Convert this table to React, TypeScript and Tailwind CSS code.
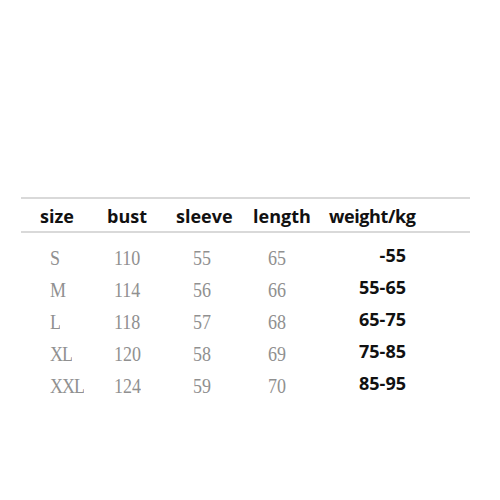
const rows = [
  { size: "S", bust: "110", sleeve: "55", length: "65", weight: "-55" },
  { size: "M", bust: "114", sleeve: "56", length: "66", weight: "55-65" },
  { size: "L", bust: "118", sleeve: "57", length: "68", weight: "65-75" },
  { size: "XL", bust: "120", sleeve: "58", length: "69", weight: "75-85" },
  { size: "XXL", bust: "124", sleeve: "59", length: "70", weight: "85-95" },
];

const cell =
  "font-['Liberation_Serif',serif] text-[18px] text-[#909090] scale-y-[1.18] origin-center";

export default function App() {
  return (
    <div className="w-[500px] h-[500px] bg-white pt-[197px]">
      <div className="ml-[21px] w-[449px]">
        <div className="border-t-2 border-b-2 border-[#d9d9d9] h-[36px] flex items-center pt-[2px] pl-[19px] font-['Open_Sans',sans-serif] font-bold text-[18px] text-[#111]">
          <div className="w-[67px]">size</div>
          <div className="w-[69px]">bust</div>
          <div className="w-[77px]">sleeve</div>
          <div className="w-[76px]">length</div>
          <div className="tracking-[-0.4px]">weight/kg</div>
        </div>
        <div className="pt-[9px]">
          {rows.map((r) => (
            <div key={r.size} className="h-[32px] flex items-center pl-[29px]">
              <div className="w-[64px]">
                <div className={cell + " tracking-[-1px]"}>{r.size}</div>
              </div>
              <div className="w-[79px]">
                <div className={cell}>{r.bust}</div>
              </div>
              <div className="w-[75px]">
                <div className={cell}>{r.sleeve}</div>
              </div>
              <div className="w-[72px]">
                <div className={cell}>{r.length}</div>
              </div>
              <div className="w-[66px] text-right font-['Open_Sans',sans-serif] font-bold text-[18px] text-[#111] -mt-[6px]">
                {r.weight}
              </div>
            </div>
          ))}
        </div>
      </div>
    </div>
  );
}
